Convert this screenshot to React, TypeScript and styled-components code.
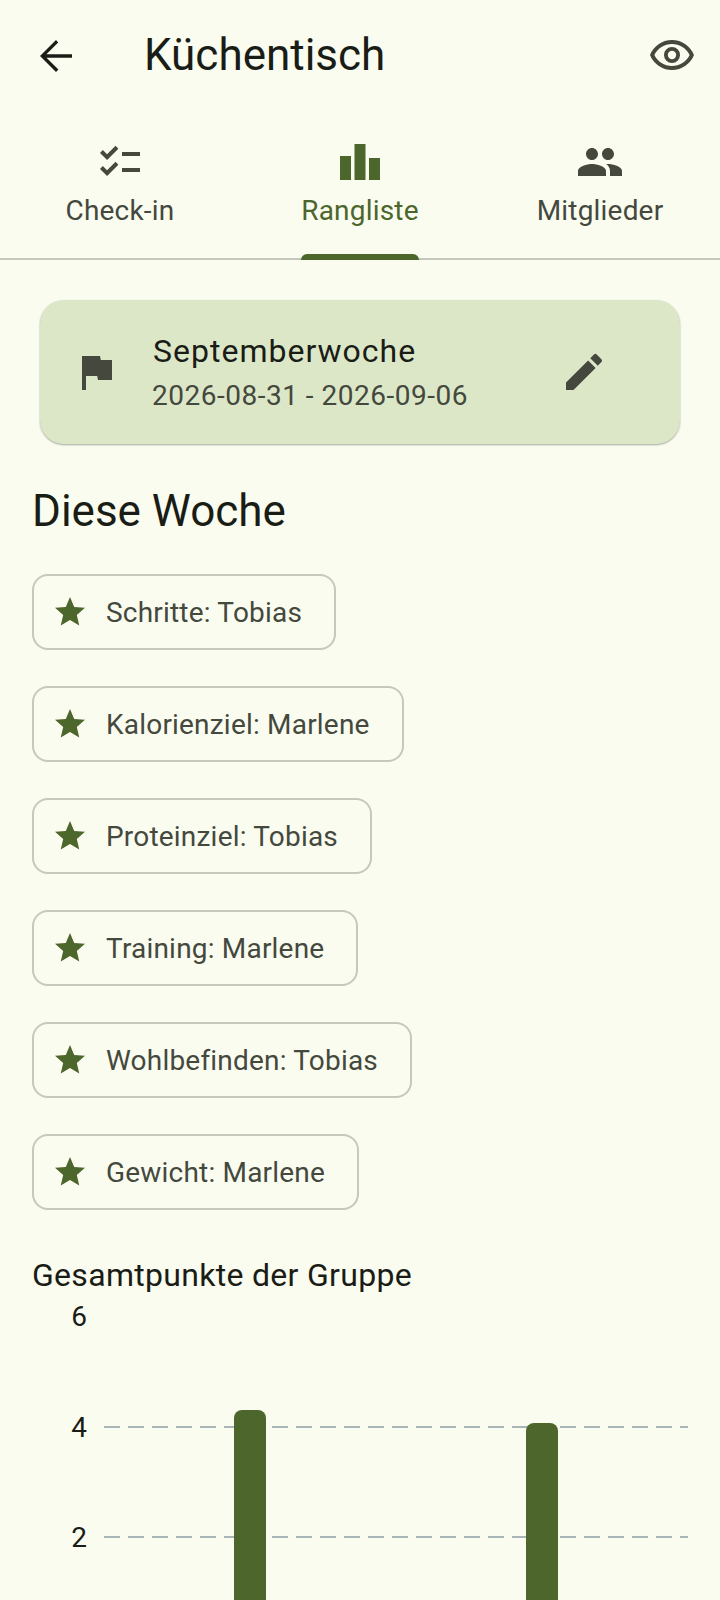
import * as React from "react";
import styled, { createGlobalStyle } from "styled-components";

const GlobalStyle = createGlobalStyle`
  html, body {
    margin: 0;
    padding: 0;
    background: #fafcf0;
  }
  * {
    box-sizing: border-box;
  }
`;

const Page = styled.div`
  width: 720px;
  height: 1600px;
  overflow: hidden;
  background: #fafcf0;
  color: #1a1c16;
  font-family: Roboto, "Liberation Sans", sans-serif;
`;

const AppBar = styled.header`
  display: flex;
  align-items: center;
  height: 112px;
  padding: 0 24px 0 32px;
`;

const Title = styled.h1`
  flex: 1;
  margin: 0 0 2px 64px;
  font-size: 44px;
  font-weight: 400;
  line-height: 56px;
`;

const Icon = styled.svg<{ $size?: number; $color?: string }>`
  display: block;
  flex: none;
  width: ${(p) => p.$size ?? 48}px;
  height: ${(p) => p.$size ?? 48}px;
  fill: ${(p) => p.$color ?? "#44483d"};
`;

const Tabs = styled.nav`
  display: flex;
  height: 148px;
  border-bottom: 2px solid #c5c8ba;
`;

const Tab = styled.div<{ $active?: boolean }>`
  position: relative;
  flex: 1;
  display: flex;
  flex-direction: column;
  align-items: center;
  padding-top: 26px;
  color: ${(p) => (p.$active ? "#4c662b" : "#44483d")};
`;

const TabLabel = styled.span`
  margin-top: 5px;
  font-size: 28px;
  line-height: 40px;
  letter-spacing: 0.2px;
`;

const TabIndicator = styled.span`
  position: absolute;
  left: 61px;
  right: 61px;
  bottom: -2px;
  height: 6px;
  border-radius: 6px 6px 0 0;
  background: #4c662b;
`;

const Card = styled.section`
  display: flex;
  align-items: center;
  height: 144px;
  margin: 40px 40px 0;
  padding: 0 72px 0 32px;
  border-radius: 24px;
  background: #dce7c8;
  box-shadow: 0 1px 2px rgba(0, 0, 0, 0.25), 0 1px 2px 0 rgba(0, 0, 0, 0.1);
`;

const CardText = styled.div`
  flex: 1;
  margin-left: 32px;
`;

const CardTitle = styled.div`
  margin-bottom: 2px;
  padding-left: 1px;
  font-size: 32px;
  line-height: 46px;
  letter-spacing: 1px;
`;

const CardDate = styled.div`
  font-size: 28px;
  line-height: 40px;
  letter-spacing: 0.5px;
  color: #44483d;
`;

const Content = styled.main`
  padding: 0 32px;
`;

const Heading = styled.h2`
  margin: 39px 0 0;
  font-size: 44px;
  font-weight: 400;
  line-height: 56px;
`;

const ChipList = styled.div`
  display: flex;
  flex-direction: column;
  align-items: flex-start;
  gap: 36px;
  margin-top: 35px;
`;

const Chip = styled.div`
  display: flex;
  align-items: center;
  gap: 18px;
  height: 76px;
  padding: 0 32px 0 18px;
  border: 2px solid #c5c8ba;
  border-radius: 16px;
  font-size: 28px;
  letter-spacing: 0.2px;
  color: #44483d;
`;

const ChartTitle = styled.h3`
  margin: 45px 0 0;
  font-size: 32px;
  font-weight: 400;
  line-height: 40px;
  letter-spacing: 0.3px;
`;

const Chart = styled.svg`
  display: block;
  width: 720px;
  height: 320px;
  margin: 5px -32px 0;
  font-family: Roboto, "Liberation Sans", sans-serif;
  font-size: 28px;
  fill: #1a1c16;
`;

const ICONS = {
  back: "M20 11.15H7.2l5.9-5.9L12 4l-8 8 8 8 1.2-1.25-5.95-5.9H20z",
  eye: "M12 6c3.79 0 7.17 2.13 8.82 5.5C19.17 14.87 15.79 17 12 17s-7.17-2.13-8.82-5.5C4.83 8.13 8.21 6 12 6m0-2C7 4 2.73 7.11 1 11.5 2.73 15.89 7 19 12 19s9.27-3.11 11-7.5C21.27 7.11 17 4 12 4zm0 5.4a2.1 2.1 0 1 1 0 4.2 2.1 2.1 0 0 1 0-4.2m0-1.9a4 4 0 1 0 0 8 4 4 0 0 0 0-8z",
  checklist:
    "M22 7h-9v2h9V7zm0 8h-9v2h9v-2zM5.54 11 2 7.46l1.41-1.41 2.12 2.12 4.24-4.24 1.41 1.41L5.54 11zm0 8L2 15.46l1.41-1.41 2.12 2.12 4.24-4.24 1.41 1.41L5.54 19z",
  leaderboard:
    "M7.5 21H2V9h5.5v12zm7.25-18h-5.5v18h5.5V3zM22 10h-5.5v11H22V10z",
  people:
    "M16 11c1.66 0 2.99-1.34 2.99-3S17.66 5 16 5c-1.66 0-3 1.34-3 3s1.34 3 3 3zm-8 0c1.66 0 2.99-1.34 2.99-3S9.66 5 8 5C6.34 5 5 6.34 5 8s1.34 3 3 3zm0 2c-2.33 0-7 1.17-7 3.5V19h14v-2.5c0-2.33-4.67-3.5-7-3.5zm8 0c-.29 0-.62.02-.97.05 1.16.84 1.97 1.97 1.97 3.45V19h6v-2.5c0-2.33-4.67-3.5-7-3.5z",
  flag: "M14.4 6 14 4H5v17h2v-7h5.6l.4 2h7V6z",
  edit: "M3 17.25V21h3.75L17.81 9.94l-3.75-3.75L3 17.25zM20.71 7.04c.39-.39.39-1.02 0-1.41l-2.34-2.34a.9959.9959 0 0 0-1.41 0l-1.83 1.83 3.75 3.75 1.83-1.83z",
  star: "M12 17.27 18.18 21l-1.64-7.03L22 9.24l-7.19-.61L12 2 9.19 8.63 2 9.24l5.46 4.73L5.82 21z",
};

const Glyph = ({
  name,
  size,
  color,
}: {
  name: keyof typeof ICONS;
  size?: number;
  color?: string;
}) => (
  <Icon viewBox="0 0 24 24" $size={size} $color={color}>
    <path d={ICONS[name]} />
  </Icon>
);

const TABS: { label: string; icon: keyof typeof ICONS; active?: boolean }[] = [
  { label: "Check-in", icon: "checklist" },
  { label: "Rangliste", icon: "leaderboard", active: true },
  { label: "Mitglieder", icon: "people" },
];

const WINNERS = [
  "Schritte: Tobias",
  "Kalorienziel: Marlene",
  "Proteinziel: Tobias",
  "Training: Marlene",
  "Wohlbefinden: Tobias",
  "Gewicht: Marlene",
];

const bar = (x: number, top: number) =>
  `M${x} 340V${top + 8}a8 8 0 0 1 8-8h16a8 8 0 0 1 8 8V340Z`;

export default function App() {
  return (
    <Page>
      <GlobalStyle />
      <AppBar>
        <Glyph name="back" color="#1a1c16" />
        <Title>Küchentisch</Title>
        <Glyph name="eye" />
      </AppBar>
      <Tabs>
        {TABS.map((t) => (
          <Tab key={t.label} $active={t.active}>
            <Glyph name={t.icon} color={t.active ? "#4c662b" : "#44483d"} />
            <TabLabel>{t.label}</TabLabel>
            {t.active && <TabIndicator />}
          </Tab>
        ))}
      </Tabs>
      <Card>
        <Glyph name="flag" />
        <CardText>
          <CardTitle>Septemberwoche</CardTitle>
          <CardDate>2026-08-31 - 2026-09-06</CardDate>
        </CardText>
        <Glyph name="edit" />
      </Card>
      <Content>
        <Heading>Diese Woche</Heading>
        <ChipList>
          {WINNERS.map((w) => (
            <Chip key={w}>
              <Glyph name="star" size={36} color="#4c662b" />
              {w}
            </Chip>
          ))}
        </ChipList>
        <ChartTitle>Gesamtpunkte der Gruppe</ChartTitle>
        <Chart viewBox="0 0 720 320">
          <text x="87" y="26" textAnchor="end">6</text>
          <text x="87" y="137" textAnchor="end">4</text>
          <text x="87" y="247" textAnchor="end">2</text>
          <g stroke="#a9b4b6" strokeWidth="2" strokeDasharray="16 8">
            <line x1="104" x2="688" y1="127" y2="127" />
            <line x1="104" x2="688" y1="237" y2="237" />
          </g>
          <path d={bar(234, 110)} fill="#4c662b" />
          <path d={bar(526, 123)} fill="#4c662b" />
        </Chart>
      </Content>
    </Page>
  );
}
